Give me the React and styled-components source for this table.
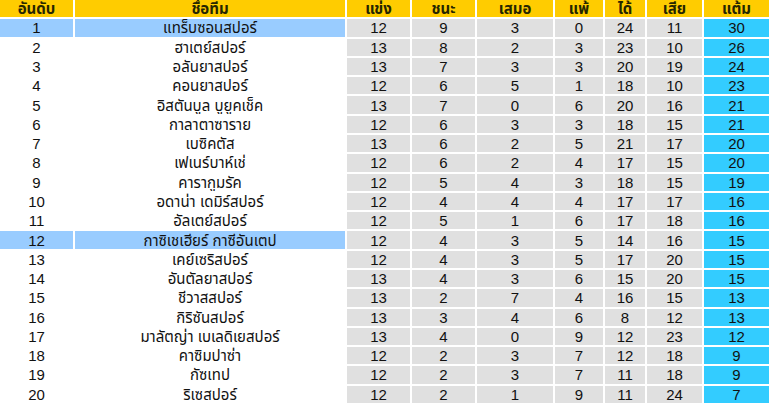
import React from "react";
import styled, { createGlobalStyle } from "styled-components";

const GlobalStyle = createGlobalStyle`
  html, body { margin: 0; padding: 0; background: #ffffff; }
  body { font-family: Tahoma, "Liberation Sans", "Noto Sans Thai", "Noto Sans", sans-serif; }
`;

const COLS = "73px 270px 63px 63px 76px 48px 40px 55px 65px";

const Table = styled.div`
  width: 769px;
  height: 403px;
  display: flex;
  flex-direction: column;
  gap: 2px;
  background: #ffffff;
`;

const Row = styled.div`
  flex: 1 1 0;
  display: grid;
  grid-template-columns: ${COLS};
  column-gap: 2px;
  min-height: 0;
`;

const Cell = styled.div`
  display: flex;
  align-items: center;
  justify-content: center;
  font-size: 15px;
  line-height: 1;
  color: #111111;
  white-space: nowrap;
  overflow: hidden;
  background: ${(p) => p.$bg};
`;

const HeadCell = styled(Cell)`
  background: #ffcc00;
  font-weight: bold;
  color: #262600;
`;

const headers = ["อันดับ", "ชื่อทีม", "แข่ง", "ชนะ", "เสมอ", "แพ้", "ได้", "เสีย", "แต้ม"];

const data = [
  [1, "แทร็บซอนสปอร์", 12, 9, 3, 0, 24, 11, 30],
  [2, "ฮาเตย์สปอร์", 13, 8, 2, 3, 23, 10, 26],
  [3, "อลันยาสปอร์", 13, 7, 3, 3, 20, 19, 24],
  [4, "คอนยาสปอร์", 12, 6, 5, 1, 18, 10, 23],
  [5, "อิสตันบูล บูยูคเช็ค", 13, 7, 0, 6, 20, 16, 21],
  [6, "กาลาตาซาราย", 12, 6, 3, 3, 18, 15, 21],
  [7, "เบซิคตัส", 13, 6, 2, 5, 21, 17, 20],
  [8, "เฟเนร์บาห์เช่", 12, 6, 2, 4, 17, 15, 20],
  [9, "คารากูมรัค", 12, 5, 4, 3, 18, 15, 19],
  [10, "อดาน่า เดมิร์สปอร์", 12, 4, 4, 4, 17, 17, 16],
  [11, "อัลเตย์สปอร์", 12, 5, 1, 6, 17, 18, 16],
  [12, "กาซิเชเฮียร์ กาซีอันเตป", 12, 4, 3, 5, 14, 16, 15],
  [13, "เคย์เซริสปอร์", 12, 4, 3, 5, 17, 20, 15],
  [14, "อันตัลยาสปอร์", 13, 4, 3, 6, 15, 20, 15],
  [15, "ชีวาสสปอร์", 13, 2, 7, 4, 16, 15, 13],
  [16, "กิริซันสปอร์", 13, 3, 4, 6, 8, 12, 13],
  [17, "มาลัตญ่า เบเลดิเยสปอร์", 13, 4, 0, 9, 12, 23, 12],
  [18, "คาซิมปาซ่า", 12, 2, 3, 7, 12, 18, 9],
  [19, "กัซเทป", 12, 2, 3, 7, 11, 18, 9],
  [20, "ริเซสปอร์", 12, 2, 1, 9, 11, 24, 7],
];

const highlighted = new Set([1, 12]);

function cellBg(rank, idx) {
  if (idx <= 1) return highlighted.has(rank) ? "#99ccff" : "#ffffff";
  if (idx === 8) return "#33ccff";
  return "#e0e0e0";
}

export default function App() {
  return (
    <>
      <GlobalStyle />
      <Table>
        <Row>
          {headers.map((h) => (
            <HeadCell key={h}>{h}</HeadCell>
          ))}
        </Row>
        {data.map((r) => (
          <Row key={r[0]}>
            {r.map((v, i) => (
              <Cell key={i} $bg={cellBg(r[0], i)}>
                {v}
              </Cell>
            ))}
          </Row>
        ))}
      </Table>
    </>
  );
}
